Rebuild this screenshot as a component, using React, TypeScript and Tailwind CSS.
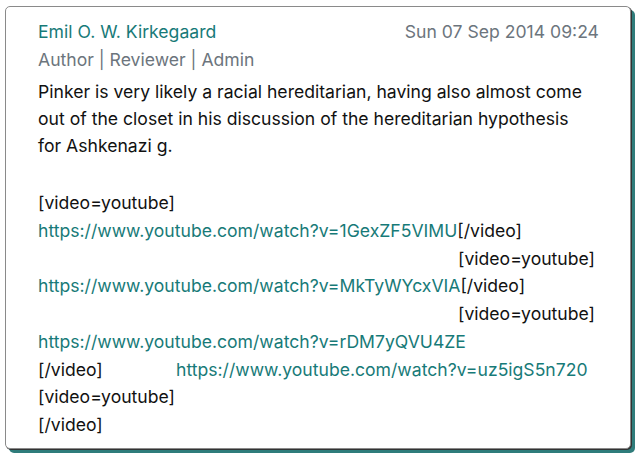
import React from "react";

const Link = ({ children }: { children: React.ReactNode }) => (
  <a href="#" className="text-[#177a78]">{children}</a>
);

export default function App() {
  return (
    <div className="w-[640px] h-[458px] bg-white pt-[6px] pl-[5px]" style={{ fontFamily: 'Inter, "Liberation Sans", Arial, sans-serif' }}>
      <div className="w-[626px] h-[443px] border border-[#8a8a8a] rounded-[5px] shadow-[1px_1px_0_#333,4px_4px_0_#2f7c7b] bg-white pl-[32px] pr-[31px] pt-[13px] text-[17.6px] leading-[27.75px] text-[#111]">
        <div className="flex justify-between items-baseline leading-[24px]">
          <span className="text-[#177a78]">Emil O. W. Kirkegaard</span>
          <span className="text-[#6c757d]">Sun 07 Sep 2014 09:24</span>
        </div>
        <div className="text-[#6c757d] leading-[28px] mt-[2px] mb-[4px]">Author | Reviewer | Admin</div>
        <div className="leading-[27px]">Pinker is very likely a racial hereditarian, having also almost come</div>
        <div className="leading-[27px]">out of the closet in his discussion of the hereditarian hypothesis</div>
        <div className="leading-[27px]">for Ashkenazi g.</div>
        <div className="h-[30px]" />
        <div>[video=youtube]</div>
        <div><Link>https://www.youtube.com/watch?v=1GexZF5VIMU</Link>[/video]</div>
        <div className="pl-[420px]">[video=youtube]</div>
        <div><Link>https://www.youtube.com/watch?v=MkTyWYcxVIA</Link>[/video]</div>
        <div className="pl-[420px]">[video=youtube]</div>
        <div><Link>https://www.youtube.com/watch?v=rDM7yQVU4ZE</Link></div>
        <div className="flex"><span className="w-[138px]">[/video]</span><Link>https://www.youtube.com/watch?v=uz5igS5n720</Link></div>
        <div>[video=youtube]</div>
        <div>[/video]</div>
      </div>
    </div>
  );
}
